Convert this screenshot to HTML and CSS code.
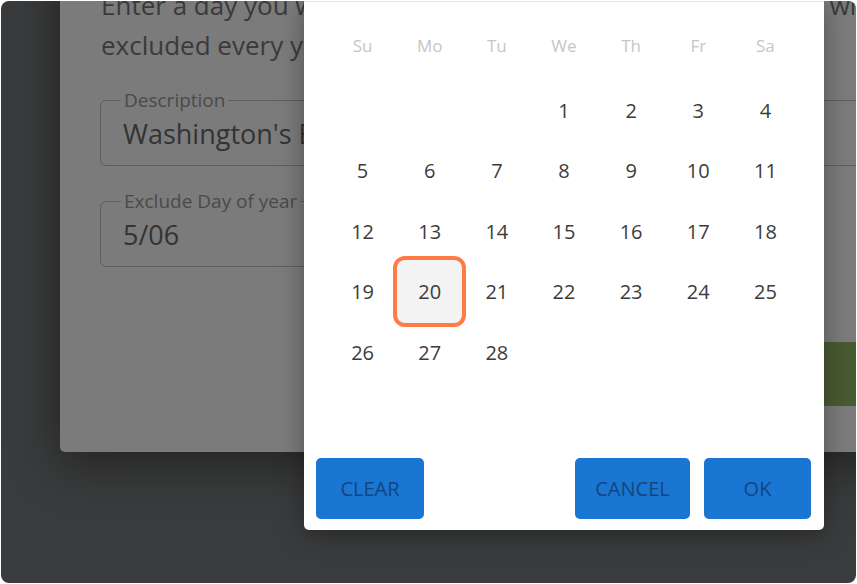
FILE: index.html
```html
<!DOCTYPE html>
<html lang="en">
<head>
    <meta charset="UTF-8">
    <meta name="viewport" content="width=device-width, initial-scale=1.0">
    <title>Exclude Day of Year</title>
    <link rel="stylesheet" href="styles.css">
</head>
<body>
    <div class="screen">
        <!-- dimmed dialog behind the picker -->
        <div class="dialog">
            <p class="intro">Enter a day you would like to have excluded from the dates, which will be<br>excluded every year, no matter which weekday it falls on.</p>
            <fieldset class="field field-wide">
                <legend>Description</legend>
                <div class="value">Washington's Birthday</div>
            </fieldset>
            <fieldset class="field field-short">
                <legend>Exclude Day of year</legend>
                <div class="value">5/06</div>
            </fieldset>
            <div class="actions">
                <button class="save">SAVE</button>
            </div>
        </div>

        <!-- date picker -->
        <div class="picker">
            <div class="weekdays">
                <span>Su</span><span>Mo</span><span>Tu</span><span>We</span><span>Th</span><span>Fr</span><span>Sa</span>
            </div>
            <div class="days">
                <span></span><span></span><span></span>
                <span class="day">1</span><span class="day">2</span><span class="day">3</span><span class="day">4</span>
                <span class="day">5</span><span class="day">6</span><span class="day">7</span><span class="day">8</span><span class="day">9</span><span class="day">10</span><span class="day">11</span>
                <span class="day">12</span><span class="day">13</span><span class="day">14</span><span class="day">15</span><span class="day">16</span><span class="day">17</span><span class="day">18</span>
                <span class="day">19</span><span class="day"><b class="selected">20</b></span><span class="day">21</span><span class="day">22</span><span class="day">23</span><span class="day">24</span><span class="day">25</span>
                <span class="day">26</span><span class="day">27</span><span class="day">28</span>
            </div>
            <div class="picker-actions">
                <button class="btn btn-clear">CLEAR</button>
                <div class="spacer"></div>
                <button class="btn btn-cancel">CANCEL</button>
                <button class="btn btn-ok">OK</button>
            </div>
        </div>
    </div>
</body>
</html>
```

FILE: styles.css
```css
body {
    margin: 0;
    background: #fff;
    font-family: "Open Sans", "Liberation Sans", sans-serif;
}
.screen {
    position: relative;
    width: 855px;
    height: 582px;
    margin: 1px;
    border-radius: 8px;
    background: #3a3b3c;
    overflow: hidden;
}
.dialog {
    position: absolute;
    left: 59px;
    top: -41px;
    width: 900px;
    height: 492px;
    box-sizing: border-box;
    padding: 25px 0 0 40px;
    background: #7b7b7b;
    border-radius: 5px;
    box-shadow: 0 10px 50px rgba(0,0,0,0.45);
    color: #3a3a3a;
}
.intro {
    margin: 0;
    padding-left: 1px;
    font-size: 26px;
    line-height: 40px;
    white-space: nowrap;
}
.field {
    margin: 25px 0 0 0;
    padding: 6px 20px 13px 20px;
    border: 1px solid #5e5e5e;
    border-radius: 6px;
    box-sizing: border-box;
}
.field-wide {
    width: 900px;
}
.field-short {
    width: 420px;
    margin-top: 25px;
}
.field legend {
    padding: 0 3px;
    font-size: 19px;
    line-height: 20px;
    color: #4a4a4a;
}
.value {
    margin-left: 2px;
    font-size: 27px;
    line-height: 36px;
    color: #333;
}
.actions {
    margin-top: 75px;
    padding-left: 700px;
}
.save {
    width: 160px;
    height: 64px;
    border: none;
    border-radius: 5px;
    background: #485a31;
    color: #2a3420;
    font-family: inherit;
    font-size: 20px;
}

.picker {
    position: absolute;
    left: 303px;
    top: 0;
    width: 520px;
    height: 529px;
    display: flex;
    flex-direction: column;
    background: #fff;
    border-top: 1px solid #e4e4e4;
    border-radius: 0 0 5px 5px;
    box-shadow: 0 4px 24px rgba(0,0,0,0.35);
    box-sizing: border-box;
}
.weekdays, .days {
    display: grid;
    grid-template-columns: repeat(7, 1fr);
    padding: 0 25px;
}
.weekdays {
    margin-top: 18px;
    height: 50px;
    align-items: center;
    text-align: center;
    font-size: 17px;
    color: #c6c6c6;
}
.days {
    margin-top: 10px;
    grid-auto-rows: 60.5px;
}
.day {
    display: flex;
    align-items: center;
    justify-content: center;
    font-size: 20px;
    color: #3c3c3c;
}
.selected {
    flex-shrink: 0;
    display: flex;
    align-items: center;
    justify-content: center;
    width: 65px;
    height: 63px;
    font-weight: normal;
    background: #f3f3f3;
    border-radius: 8px;
    box-shadow: 0 0 0 4px #ff7a45;
}
.picker-actions {
    margin-top: auto;
    display: flex;
    gap: 14px;
    padding: 0 13px 11px 12px;
}
.spacer {
    flex: 1;
}
.btn {
    height: 61px;
    border: none;
    border-radius: 5px;
    background: #1976d2;
    color: #154580;
    font-family: inherit;
    font-size: 20px;
    cursor: pointer;
}
.btn-clear {
    width: 108px;
}
.btn-cancel {
    width: 115px;
}
.btn-ok {
    width: 107px;
}
```
